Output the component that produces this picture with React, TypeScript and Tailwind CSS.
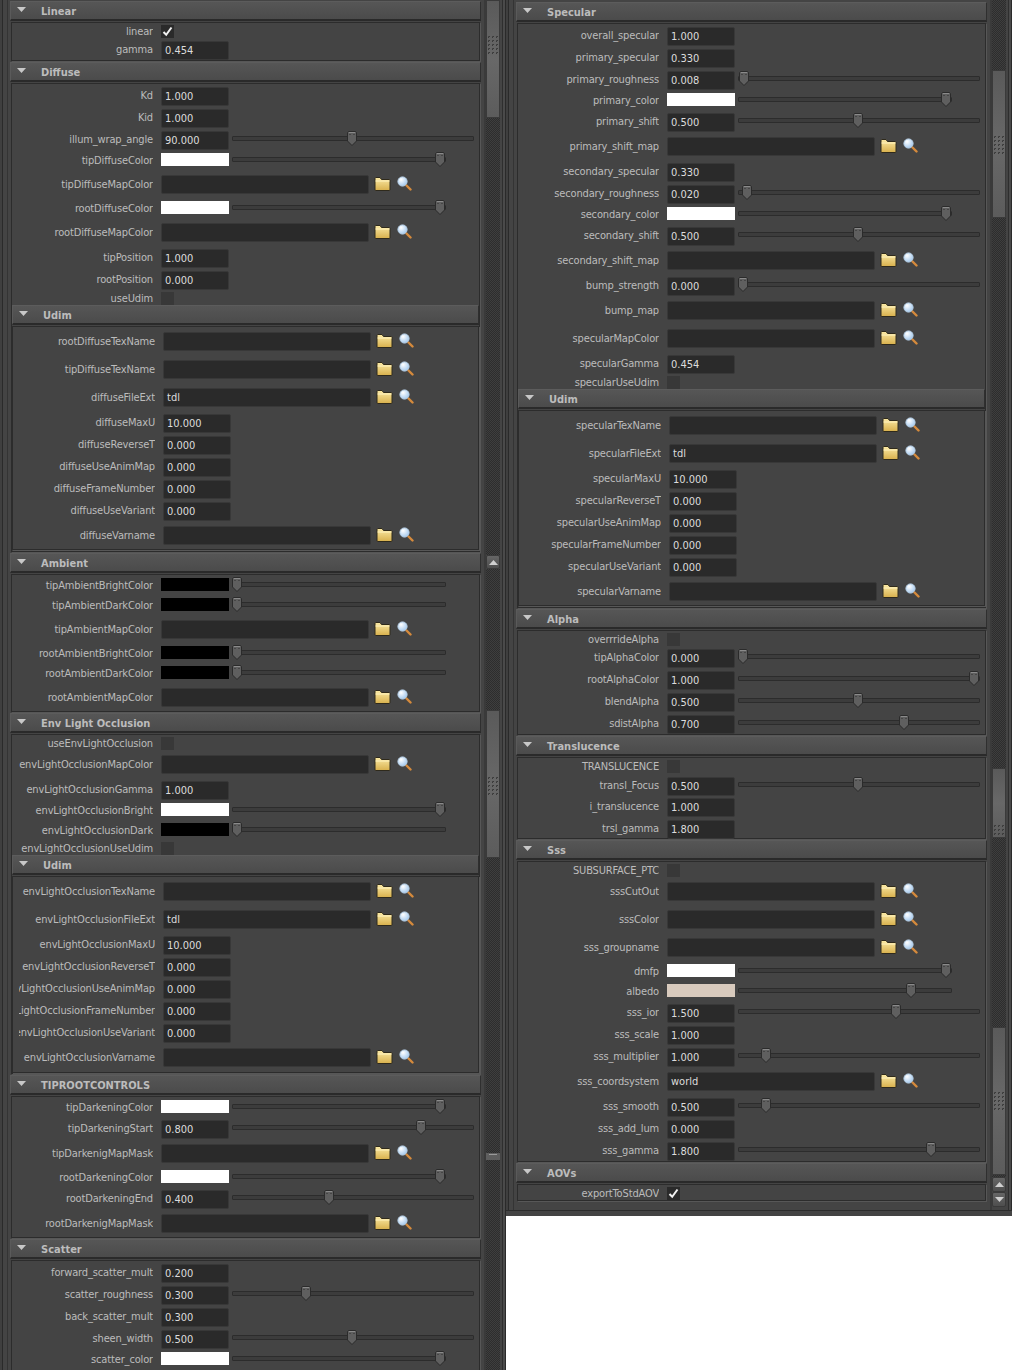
import React from "react";

type Row = [string, number, "n" | "c" | "m" | "k", (string | boolean)?, number?];
type Sec = { title: string; y: number; end: number; rows: Row[]; sub?: Sec };

const W = "#ffffff";
const B = "#000000";

const leftSecs: Sec[] = [
  { title: "Linear", y: 11, end: 61, rows: [["linear", 31, "k", true], ["gamma", 49, "n", "0.454"]] },
  {
    title: "Diffuse", y: 72, end: 552,
    rows: [
      ["Kd", 95, "n", "1.000"], ["Kid", 117, "n", "1.000"], ["illum_wrap_angle", 139, "n", "90.000", 352],
      ["tipDiffuseColor", 160, "c", W, 440], ["tipDiffuseMapColor", 184, "m"], ["rootDiffuseColor", 208, "c", W, 440],
      ["rootDiffuseMapColor", 232, "m"], ["tipPosition", 257, "n", "1.000"], ["rootPosition", 279, "n", "0.000"], ["useUdim", 298, "k", false],
    ],
    sub: {
      title: "Udim", y: 315, end: 550,
      rows: [
        ["rootDiffuseTexName", 341, "m"], ["tipDiffuseTexName", 369, "m"], ["diffuseFileExt", 397, "m", "tdl"],
        ["diffuseMaxU", 422, "n", "10.000"], ["diffuseReverseT", 444, "n", "0.000"], ["diffuseUseAnimMap", 466, "n", "0.000"],
        ["diffuseFrameNumber", 488, "n", "0.000"], ["diffuseUseVariant", 510, "n", "0.000"], ["diffuseVarname", 535, "m"],
      ],
    },
  },
  {
    title: "Ambient", y: 563, end: 712,
    rows: [
      ["tipAmbientBrightColor", 585, "c", B, 237], ["tipAmbientDarkColor", 605, "c", B, 237], ["tipAmbientMapColor", 629, "m"],
      ["rootAmbientBrightColor", 653, "c", B, 237], ["rootAmbientDarkColor", 673, "c", B, 237], ["rootAmbientMapColor", 697, "m"],
    ],
  },
  {
    title: "Env Light Occlusion", y: 723, end: 1074,
    rows: [
      ["useEnvLightOcclusion", 743, "k", false], ["envLightOcclusionMapColor", 764, "m"], ["envLightOcclusionGamma", 789, "n", "1.000"],
      ["envLightOcclusionBright", 810, "c", W, 440], ["envLightOcclusionDark", 830, "c", B, 237], ["envLightOcclusionUseUdim", 848, "k", false],
    ],
    sub: {
      title: "Udim", y: 865, end: 1073,
      rows: [
        ["envLightOcclusionTexName", 891, "m"], ["envLightOcclusionFileExt", 919, "m", "tdl"], ["envLightOcclusionMaxU", 944, "n", "10.000"],
        ["envLightOcclusionReverseT", 966, "n", "0.000"], ["envLightOcclusionUseAnimMap", 988, "n", "0.000"],
        ["envLightOcclusionFrameNumber", 1010, "n", "0.000"], ["envLightOcclusionUseVariant", 1032, "n", "0.000"], ["envLightOcclusionVarname", 1057, "m"],
      ],
    },
  },
  {
    title: "TIPROOTCONTROLS", y: 1085, end: 1238,
    rows: [
      ["tipDarkeningColor", 1107, "c", W, 440], ["tipDarkeningStart", 1128, "n", "0.800", 421], ["tipDarkenigMapMask", 1153, "m"],
      ["rootDarkeningColor", 1177, "c", W, 440], ["rootDarkeningEnd", 1198, "n", "0.400", 329], ["rootDarkenigMapMask", 1223, "m"],
    ],
  },
  {
    title: "Scatter", y: 1249, end: 1400,
    rows: [
      ["forward_scatter_mult", 1272, "n", "0.200"], ["scatter_roughness", 1294, "n", "0.300", 306], ["back_scatter_mult", 1316, "n", "0.300"],
      ["sheen_width", 1338, "n", "0.500", 352], ["scatter_color", 1359, "c", W, 440],
    ],
  },
];

const rightSecs: Sec[] = [
  {
    title: "Specular", y: 12, end: 608,
    rows: [
      ["overall_specular", 35, "n", "1.000"], ["primary_specular", 57, "n", "0.330"], ["primary_roughness", 79, "n", "0.008", 744],
      ["primary_color", 100, "c", W, 946], ["primary_shift", 121, "n", "0.500", 858], ["primary_shift_map", 146, "m"],
      ["secondary_specular", 171, "n", "0.330"], ["secondary_roughness", 193, "n", "0.020", 747], ["secondary_color", 214, "c", W, 946],
      ["secondary_shift", 235, "n", "0.500", 858], ["secondary_shift_map", 260, "m"], ["bump_strength", 285, "n", "0.000", 743],
      ["bump_map", 310, "m"], ["specularMapColor", 338, "m"], ["specularGamma", 363, "n", "0.454"], ["specularUseUdim", 382, "k", false],
    ],
    sub: {
      title: "Udim", y: 399, end: 606,
      rows: [
        ["specularTexName", 425, "m"], ["specularFileExt", 453, "m", "tdl"], ["specularMaxU", 478, "n", "10.000"],
        ["specularReverseT", 500, "n", "0.000"], ["specularUseAnimMap", 522, "n", "0.000"], ["specularFrameNumber", 544, "n", "0.000"],
        ["specularUseVariant", 566, "n", "0.000"], ["specularVarname", 591, "m"],
      ],
    },
  },
  {
    title: "Alpha", y: 619, end: 735,
    rows: [
      ["overrrideAlpha", 639, "k", false], ["tipAlphaColor", 657, "n", "0.000", 743], ["rootAlphaColor", 679, "n", "1.000", 974],
      ["blendAlpha", 701, "n", "0.500", 858], ["sdistAlpha", 723, "n", "0.700", 904],
    ],
  },
  {
    title: "Translucence", y: 746, end: 839,
    rows: [
      ["TRANSLUCENCE", 766, "k", false], ["transl_Focus", 785, "n", "0.500", 858], ["i_translucence", 806, "n", "1.000"], ["trsl_gamma", 828, "n", "1.800"],
    ],
  },
  {
    title: "Sss", y: 850, end: 1162,
    rows: [
      ["SUBSURFACE_PTC", 870, "k", false], ["sssCutOut", 891, "m"], ["sssColor", 919, "m"], ["sss_groupname", 947, "m"],
      ["dmfp", 971, "c", W, 946], ["albedo", 991, "c", "#d8cabd", 911], ["sss_ior", 1012, "n", "1.500", 896], ["sss_scale", 1034, "n", "1.000"],
      ["sss_multiplier", 1056, "n", "1.000", 766], ["sss_coordsystem", 1081, "m", "world"], ["sss_smooth", 1106, "n", "0.500", 766],
      ["sss_add_lum", 1128, "n", "0.000"], ["sss_gamma", 1150, "n", "1.800", 931],
    ],
  },
  { title: "AOVs", y: 1173, end: 1201, rows: [["exportToStdAOV", 1193, "k", true]] },
];

function Folder() {
  return (
    <svg width="17" height="15" viewBox="0 0 17 15" className="shrink-0">
      <defs>
        <linearGradient id="folderFill" x1="0" y1="0" x2="0" y2="1">
          <stop offset="0" stopColor="#fbeaa6" />
          <stop offset="1" stopColor="#d8b04c" />
        </linearGradient>
      </defs>
      <path d="M1 13.5V2.5Q1 1.5 2 1.5H6L7.5 3.5H15Q16 3.5 16 4.5V13.5Q16 14.5 15 14.5H2Q1 14.5 1 13.5Z" fill="url(#folderFill)" stroke="#2f2a1c" strokeWidth="1" />
      <path d="M1.5 5H15.5" stroke="#fff3c0" strokeWidth="1" />
    </svg>
  );
}

function Magnifier() {
  return (
    <svg width="15" height="15" viewBox="0 0 15 15" className="shrink-0">
      <defs>
        <radialGradient id="lensFill" cx="0.35" cy="0.3" r="0.8">
          <stop offset="0" stopColor="#ffffff" />
          <stop offset="1" stopColor="#9cc4ec" />
        </radialGradient>
      </defs>
      <path d="M9.5 9.5L13.5 13.5" stroke="#d58a3c" strokeWidth="2.4" strokeLinecap="round" />
      <circle cx="5.5" cy="5.5" r="4.6" fill="url(#lensFill)" stroke="#b8d2ea" strokeWidth="1" />
    </svg>
  );
}

function Knob() {
  return (
    <svg width="10" height="15" viewBox="0 0 10 15">
      <path d="M1.5 0.5H8.5L9.5 1.5V10L5 14.5L0.5 10V1.5Z" fill="#5f5f5f" stroke="#2b2b2b" />
      <path d="M2 1.5H8" stroke="#8a8a8a" />
      <path d="M3 3V4M7 3V4" stroke="#2f2f2f" />
    </svg>
  );
}

function Slider({ knob, offset, short }: { knob: number; offset: number; short: boolean }) {
  const left = knob - offset - 232 - 6;
  return (
    <div className={`relative ml-[3px] mb-[2px] h-[5px] rounded-[1px] border border-[#2c2c2c] bg-[#3c3c3c] ${short ? "w-[214px]" : "w-[242px]"}`}>
      <div className="absolute top-[-6px] h-[15px] w-[10px]" style={{ left }}>
        <Knob />
      </div>
    </div>
  );
}

function Control({ row, offset }: { row: Row; offset: number }) {
  const [, , kind, val, knob] = row;
  if (kind === "k") {
    return (
      <div className={`flex h-[13px] w-[13px] items-center justify-center ${val ? "bg-[#2a2a2a]" : "bg-[#383838]"}`}>
        {val ? (
          <svg width="11" height="11" viewBox="0 0 11 11">
            <path d="M1.5 6L4.2 8.8L9.5 1.5" fill="none" stroke="#f0f0f0" strokeWidth="2" />
          </svg>
        ) : null}
      </div>
    );
  }
  if (kind === "n") {
    return (
      <>
        <div className="mt-[2px] flex h-[19px] w-[68px] items-center rounded-[2px] border border-[#383838] bg-[#2a2a2a] pl-[3px] pt-[1px] text-[#dcdcdc]">{val as string}</div>
        {knob ? <Slider knob={knob} offset={offset} short={false} /> : null}
      </>
    );
  }
  if (kind === "c") {
    return (
      <>
        <div className="mb-[1px] h-[13px] w-[68px]" style={{ backgroundColor: val as string }} />
        {knob ? <Slider knob={knob} offset={offset} short /> : null}
      </>
    );
  }
  return (
    <>
      <div className="flex h-[19px] w-[208px] items-center rounded-[2px] border border-[#383838] bg-[#2a2a2a] pl-[3px] pt-[1px] text-[#dcdcdc]">{val as string}</div>
      <div className="mb-[2px] ml-[5px] flex"><Folder /></div>
      <div className="mb-[2px] ml-[6px] flex"><Magnifier /></div>
    </>
  );
}

function RowView({ row, mt, labelW, offset }: { row: Row; mt: number; labelW: string; offset: number }) {
  return (
    <div className="flex h-[18px] items-center justify-start" style={{ marginTop: mt }}>
      <div className={`flex shrink-0 justify-end overflow-hidden whitespace-nowrap tracking-[-0.15px] text-[#bcbcbc] ${labelW}`}>{row[0]}</div>
      <div className="ml-[8px] flex items-center">
        <Control row={row} offset={offset} />
      </div>
    </div>
  );
}

function Triangle() {
  return (
    <svg width="9" height="5" viewBox="0 0 9 5" className="mb-[4px] shrink-0">
      <path d="M0 0H9L4.5 5Z" fill="#c8c8c8" />
    </svg>
  );
}

function Header({ title, mt }: { title: string; mt: number }) {
  return (
    <div
      className="flex h-[20px] items-center border-t border-r border-b-2 border-l border-t-[#5c5c5c] border-r-[#2f2f2f] border-b-[#2a2a2a] border-l-[#5a5a5a] bg-gradient-to-b from-[#565656] to-[#4b4b4b] pl-[6px] pt-[2px] font-bold text-[#bcbcbc]"
      style={{ marginTop: mt }}
    >
      <Triangle />
      <span className="ml-[15px]">{title}</span>
    </div>
  );
}

function Section({ sec, prevEnd, offset, sub }: { sec: Sec; prevEnd: number; offset: number; sub: boolean }) {
  const top = sec.y - 10;
  const bodyTop = top + 21;
  let cursor = bodyTop + 1;
  const labelW = sub ? "ml-[6px] w-[136px]" : "w-[141px]";
  const rows = sec.rows.map((r) => {
    const mt = r[1] - 9 - cursor;
    cursor = r[1] + 9;
    return <RowView key={r[0]} row={r} mt={mt} labelW={labelW} offset={offset} />;
  });
  return (
    <div className={sub ? "" : "w-[471px]"}>
      <Header title={sec.title} mt={top - prevEnd} />
      <div
        className={`mt-[1px] border border-[#2c2c2c] bg-[#444444] shadow-[1px_1px_0_#575757] ${sub ? "" : "mx-[1px]"}`}
        style={{ height: sec.end - bodyTop }}
      >
        {rows}
        {sec.sub ? <Section sec={sec.sub} prevEnd={cursor} offset={offset} sub /> : null}
      </div>
    </div>
  );
}

function Grip() {
  const dots: React.ReactNode[] = [];
  for (let r = 0; r < 5; r++)
    for (let c = 0; c < 3; c++)
      dots.push(<path key={`${r}-${c}`} d={`M${c * 4 + 0.5} ${r * 4 + 2}V${r * 4 + 0.5}H${c * 4 + 2}`} fill="none" stroke="#3a3a3a" />);
  return (
    <svg width="10" height="18" viewBox="0 0 10 18">
      {dots}
    </svg>
  );
}

type Seg = { k: "track" | "thumb" | "up" | "down" | "stub"; h: number; grip?: number };

function Scrollbar({ segs }: { segs: Seg[] }) {
  return (
    <div className="flex w-[14px] shrink-0 flex-col">
      {segs.map((s, i) => {
        if (s.k === "track")
          return <div key={i} className="bg-[repeating-conic-gradient(#2d2d2d_0_25%,#3e3e3e_0_50%)] bg-[length:2px_2px]" style={{ height: s.h }} />;
        if (s.k === "thumb")
          return (
            <div key={i} className="relative border border-[#3a3a3a] bg-gradient-to-b from-[#5a5a5a] via-[#686868] to-[#5c5c5c]" style={{ height: s.h }}>
              {s.grip !== undefined ? (
                <div className="absolute left-[1px]" style={{ top: s.grip - 9 }}>
                  <Grip />
                </div>
              ) : null}
            </div>
          );
        if (s.k === "stub")
          return (
            <div key={i} className="flex flex-col items-center bg-[#5e5e5e]" style={{ height: s.h }}>
              <div className="mt-[1px] h-[1px] w-[8px] bg-[#9a9a9a]" />
            </div>
          );
        return (
          <div key={i} className="flex items-center justify-center rounded-[2px] border border-[#3a3a3a] bg-gradient-to-b from-[#666666] to-[#4e4e4e]" style={{ height: s.h }}>
            <svg width="9" height="5" viewBox="0 0 9 5">
              <path d={s.k === "up" ? "M0 5H9L4.5 0Z" : "M0 0H9L4.5 5Z"} fill="#d0d0d0" />
            </svg>
          </div>
        );
      })}
    </div>
  );
}

function Column({ secs, offset, segs, height }: { secs: Sec[]; offset: number; segs: Seg[]; height: string }) {
  let prevEnd = 0;
  return (
    <div className={`flex w-[506px] overflow-hidden bg-[#444444] ${height}`}>
      <div className="w-[10px] shrink-0 shadow-[inset_2px_0_0_#3f3f3f,inset_3px_0_0_#2a2a2a,inset_-2px_0_0_#444444,inset_-3px_0_0_#343434]" />
      <div className="w-[471px] shrink-0">
        {secs.map((s) => {
          const el = <Section key={s.title} sec={s} prevEnd={prevEnd} offset={offset} sub={false} />;
          prevEnd = s.end;
          return el;
        })}
      </div>
      <div className="w-[5px] shrink-0 shadow-[inset_-2px_0_0_#3a3a3a]" />
      <Scrollbar segs={segs} />
      <div className="w-[6px] shrink-0 shadow-[inset_-1px_0_0_#2a2a2a,inset_-3px_0_0_#4a4a4a,inset_-4px_0_0_#2e2e2e]" />
    </div>
  );
}

const leftBar: Seg[] = [
  { k: "thumb", h: 118, grip: 44 }, { k: "track", h: 437 }, { k: "up", h: 14 }, { k: "track", h: 141 },
  { k: "thumb", h: 148, grip: 75 }, { k: "track", h: 295 }, { k: "stub", h: 7 }, { k: "track", h: 210 },
];
const rightBar: Seg[] = [
  { k: "track", h: 70 }, { k: "thumb", h: 148, grip: 74 }, { k: "track", h: 550 }, { k: "thumb", h: 70, grip: 65 },
  { k: "track", h: 189 }, { k: "thumb", h: 148, grip: 73 }, { k: "track", h: 2 }, { k: "up", h: 15 }, { k: "down", h: 15 },
];

export default function App() {
  return (
    <div className="flex h-[1370px] w-[1012px] items-start overflow-hidden bg-white font-['DejaVu_Sans_Condensed','DejaVu_Sans',sans-serif] text-[11px] leading-[13px] [font-stretch:condensed]">
      <Column secs={leftSecs} offset={0} segs={leftBar} height="h-[1370px]" />
      <div className="flex w-[506px] flex-col">
        <Column secs={rightSecs} offset={506} segs={rightBar} height="h-[1210px]" />
        <div className="h-[6px] border-t border-[#2c2c2c] bg-[#444444]" />
      </div>
    </div>
  );
}
